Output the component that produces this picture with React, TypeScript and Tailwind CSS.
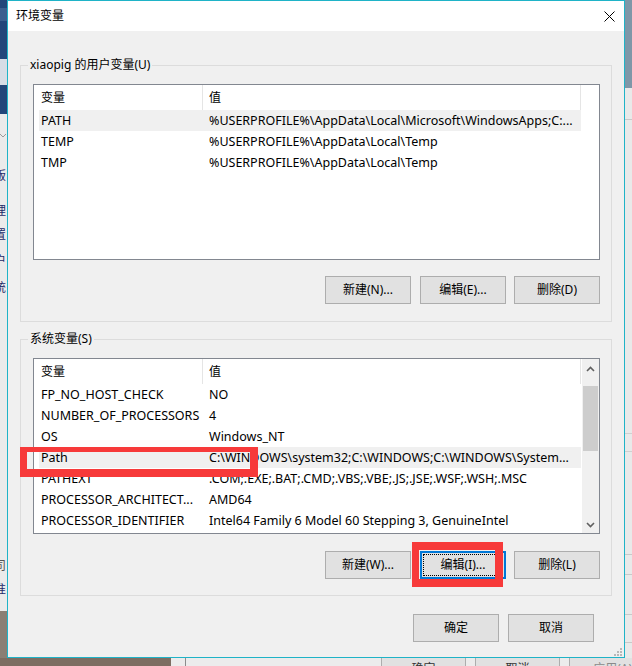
import React from "react";

type RowData = { name: string; value: string; sel?: boolean };

const userRows: RowData[] = [
  { name: "PATH", value: "%USERPROFILE%\\AppData\\Local\\Microsoft\\WindowsApps;C:...", sel: true },
  { name: "TEMP", value: "%USERPROFILE%\\AppData\\Local\\Temp" },
  { name: "TMP", value: "%USERPROFILE%\\AppData\\Local\\Temp" },
];

const sysRows: RowData[] = [
  { name: "FP_NO_HOST_CHECK", value: "NO" },
  { name: "NUMBER_OF_PROCESSORS", value: "4" },
  { name: "OS", value: "Windows_NT" },
  { name: "Path", value: "C:\\WINDOWS\\system32;C:\\WINDOWS;C:\\WINDOWS\\System...", sel: true },
  { name: "PATHEXT", value: ".COM;.EXE;.BAT;.CMD;.VBS;.VBE;.JS;.JSE;.WSF;.WSH;.MSC" },
  { name: "PROCESSOR_ARCHITECT...", value: "AMD64" },
  { name: "PROCESSOR_IDENTIFIER", value: "Intel64 Family 6 Model 60 Stepping 3, GenuineIntel" },
];

function Header() {
  return (
    <div className="flex h-[25px] shrink-0">
      <div className="w-[164px] border-r border-[#e5e5e5] pl-[2px] flex items-center">变量</div>
      <div className="w-[378px] border-r border-[#e5e5e5] pl-[6px] flex items-center">值</div>
    </div>
  );
}

function Row({ r }: { r: RowData }) {
  return (
    <div
      className={`flex h-[21px] w-[542px] items-center pt-[2px] whitespace-nowrap text-[12.5px] ${r.sel ? "bg-[#f0f0f0]" : ""}`}
    >
      <div className="w-[164px] pl-[2px] overflow-hidden">{r.name}</div>
      <div className="w-[378px] pl-[6px] overflow-hidden">{r.value}</div>
    </div>
  );
}

function Button({ label, className = "" }: { label: string; className?: string }) {
  return (
    <div
      className={`w-[86px] h-[28px] bg-[#e1e1e1] border border-[#adadad] flex items-center justify-center ${className}`}
    >
      {label}
    </div>
  );
}

function FocusButton({ label, className = "" }: { label: string; className?: string }) {
  return (
    <div
      className={`relative w-[86px] h-[28px] bg-[#e1e1e1] border-2 border-[#0078d7] flex items-center justify-center ${className}`}
    >
      <div className="absolute inset-[1px] border border-dotted border-black" />
      {label}
    </div>
  );
}

function Chevron({ up }: { up?: boolean }) {
  return (
    <svg width="9" height="6" viewBox="0 0 9 6">
      <polyline
        points={up ? "1,5 4.5,1.5 8,5" : "1,1 4.5,4.5 8,1"}
        fill="none"
        stroke="#606060"
        strokeWidth="1.6"
      />
    </svg>
  );
}

function Scrollbar() {
  return (
    <div className="w-[17px] bg-[#f0f0f0] flex flex-col">
      <div className="h-[17px] flex items-center justify-center pt-[3px]">
        <Chevron up />
      </div>
      <div className="mt-[10px] mx-[1px] h-[65px] bg-[#cdcdcd]" />
      <div className="flex-1" />
      <div className="h-[17px] flex items-center justify-center">
        <Chevron />
      </div>
    </div>
  );
}

function GroupBox({ label, children }: { label: string; children: React.ReactNode }) {
  return (
    <div className="relative h-[257px] w-[592px] border border-[#dcdcdc] pt-[18px] pl-[12px]">
      <div className="absolute left-[7px] top-[-9px] bg-[#f0f0f0] px-[2px] leading-[16px]">{label}</div>
      {children}
    </div>
  );
}

function LeftStrip() {
  const ch = "h-[16px] leading-[16px] ml-[-6px] text-[#1f2a68] whitespace-nowrap";
  return (
    <div className="w-[7px] h-full flex flex-col overflow-hidden bg-[#ebebeb]">
      <div className="h-[114px] bg-[#23467a] flex flex-col">
        <div className="h-[8px]" />
        <div className="h-[13px] bg-[#3c5f8f]" />
        <div className="h-[38px]" />
        <div className="h-[26px] bg-[#d7dde6]" />
      </div>
      <div className="mt-[16px] h-[10px] flex items-center">
        <svg width="7" height="5" viewBox="0 0 7 5">
          <polyline points="0,1 3,4 6,1" fill="none" stroke="#9a9a9a" strokeWidth="1" />
        </svg>
      </div>
      <div className={`mt-[28px] ${ch}`}>版</div>
      <div className={`mt-[19px] ${ch}`}>理</div>
      <div className={`mt-[8px] ${ch}`}>置</div>
      <div className={`mt-[10px] ${ch}`}>户</div>
      <div className={`mt-[11px] ${ch}`}>统</div>
      <div className={`mt-[262px] ${ch} text-[#555]`}>司</div>
      <div className={`mt-[8px] ${ch}`}>准</div>
      <div className="mt-[13px] flex-1 bg-[#8a7f74]" />
    </div>
  );
}

function RightStrip() {
  return (
    <div className="w-[7px] h-full flex flex-col bg-[#e9e9e9]">
      <div className="h-[88px] bg-[#7f97a8]" />
      <div className="mt-[31px] h-px bg-[#c9c9c9]" />
      <div className="mt-[313px] h-px bg-[#d0d0d0]" />
      <div className="mt-[17px] h-px bg-[#d0d0d0]" />
      <div className="mt-[102px] h-px bg-[#c9c9c9]" />
      <div className="mt-[19px] h-px bg-[#c9c9c9]" />
      <div className="mt-[39px] h-px bg-[#c9c9c9]" />
      <div className="mt-[27px] h-px bg-[#c9c9c9]" />
    </div>
  );
}

function BottomStrip() {
  return (
    <div className="h-[8px] flex overflow-hidden bg-[#ececec]">
      <div className="w-[173px] bg-[#7d6e62]" />
      <div className="ml-[14px] w-px bg-[#8c8c8c]" />
      <div className="ml-[195px] w-[86px] border-x border-[#adadad] bg-[#e1e1e1] text-center leading-[20px] pt-[1px] text-[#333]">
        确定
      </div>
      <div className="ml-[9px] w-[86px] border-x border-[#adadad] bg-[#e1e1e1] text-center leading-[20px] pt-[1px] text-[#333]">
        取消
      </div>
      <div className="ml-[9px] flex-1 border-l border-[#adadad] bg-[#e1e1e1] pl-[23px] leading-[20px] pt-[1px] text-[#8a8a8a] whitespace-nowrap">
        应用(A)
      </div>
    </div>
  );
}

function Dialog() {
  return (
    <div className="relative w-[618px] h-full border border-[#1fb3c7] flex flex-col bg-[#f0f0f0]">
      <div className="h-[30px] bg-white flex items-center justify-between pl-[8px] pr-[9px]">
        <span className="leading-[16px]">环境变量</span>
        <svg width="11" height="11" viewBox="0 0 11 11">
          <path d="M0.5 0.5 L10.5 10.5 M10.5 0.5 L0.5 10.5" stroke="#000" strokeWidth="1" />
        </svg>
      </div>
      <div className="flex-1 flex flex-col pl-[12px] pt-[34px]">
        <GroupBox label="xiaopig 的用户变量(U)">
          <div className="w-[567px] h-[176px] border border-[#828790] bg-white pl-[5px] flex flex-col">
            <Header />
            {userRows.map((r) => (
              <Row key={r.name} r={r} />
            ))}
          </div>
          <div className="w-[567px] mt-[16px] flex justify-end">
            <Button label="新建(N)..." />
            <Button label="编辑(E)..." className="ml-[9px]" />
            <Button label="删除(D)" className="ml-[8px]" />
          </div>
        </GroupBox>
        <div className="mt-[17px]">
          <GroupBox label="系统变量(S)">
            <div className="w-[567px] h-[176px] border border-[#828790] bg-white flex">
              <div className="w-[548px] pl-[5px] flex flex-col">
                <Header />
                {sysRows.map((r) => (
                  <Row key={r.name} r={r} />
                ))}
              </div>
              <Scrollbar />
            </div>
            <div className="w-[567px] mt-[17px] flex justify-end">
              <Button label="新建(W)..." />
              <FocusButton label="编辑(I)..." className="ml-[9px]" />
              <Button label="删除(L)" className="ml-[8px]" />
            </div>
          </GroupBox>
        </div>
        <div className="w-[592px] mt-[18px] flex justify-end pr-[18px]">
          <Button label="确定" />
          <Button label="取消" className="ml-[9px]" />
        </div>
      </div>
      <svg className="absolute right-[2px] bottom-[1px]" width="8" height="8" viewBox="0 0 8 8">
        <rect x="6" y="0" width="2" height="2" fill="#b8b8b8" />
        <rect x="3" y="3" width="2" height="2" fill="#b8b8b8" />
        <rect x="6" y="3" width="2" height="2" fill="#b8b8b8" />
        <rect x="0" y="6" width="2" height="2" fill="#b8b8b8" />
        <rect x="3" y="6" width="2" height="2" fill="#b8b8b8" />
        <rect x="6" y="6" width="2" height="2" fill="#b8b8b8" />
      </svg>
    </div>
  );
}

export default function App() {
  return (
    <div className="relative w-[632px] h-[666px] overflow-hidden flex flex-col bg-[#f0f0f0] text-[12px] text-black font-['Noto_Sans','Noto_Sans_CJK_SC',sans-serif]">
      <div className="flex h-[658px]">
        <LeftStrip />
        <Dialog />
        <RightStrip />
      </div>
      <BottomStrip />
      <div className="absolute left-[20px] top-[447px] w-[238px] h-[30px] border-[#f73a3a] border-l-[7px] border-t-[5px] border-r-[8px] border-b-[8px] pointer-events-none" />
      <div className="absolute left-[412px] top-[542px] w-[91px] h-[45px] border-[#f73a3a] border-l-[7px] border-t-[8px] border-r-[8px] border-b-[8px] pointer-events-none" />
    </div>
  );
}
